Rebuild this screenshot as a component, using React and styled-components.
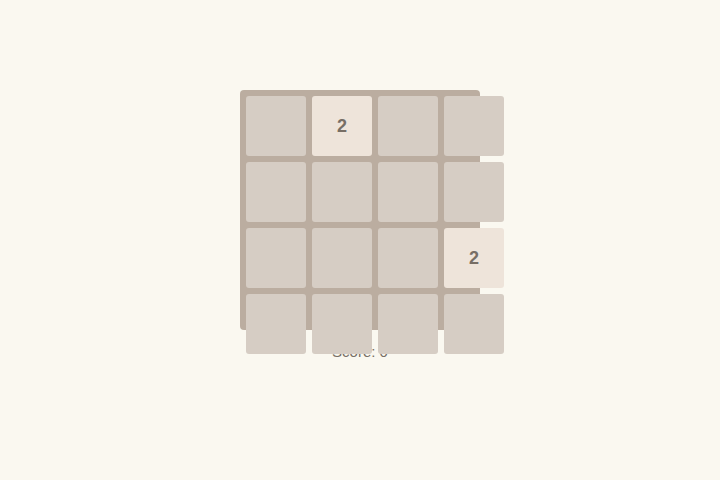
import React from 'react';
import styled, { createGlobalStyle } from 'styled-components';

const GlobalStyle = createGlobalStyle`
  html, body {
    margin: 0;
    padding: 0;
    background: #faf8f0;
  }
  body {
    font-family: "Liberation Sans", Arial, sans-serif;
  }
`;

const board = [
  [0, 2, 0, 0],
  [0, 0, 0, 0],
  [0, 0, 0, 2],
  [0, 0, 0, 0],
];

const App = () => {
  return (
    <Page>
      <GlobalStyle />
      <Board>
        <Grid>
          {board.flat().map((value, i) => (
            <Tile key={i} filled={value > 0}>
              {value > 0 ? value : ''}
            </Tile>
          ))}
        </Grid>
      </Board>
      <Score>Score: 0</Score>
    </Page>
  );
};

const Page = styled.div`
  min-height: 480px;
  box-sizing: border-box;
  padding-top: 90px;
  display: flex;
  flex-direction: column;
  align-items: center;
`;

// the board is fixed at 240px, so the tile grid spills past its right and bottom edges
const Board = styled.div`
  width: 240px;
  height: 240px;
  box-sizing: border-box;
  padding: 6px;
  background: #bbada0;
  border-radius: 4px;
`;

const Grid = styled.div`
  display: grid;
  grid-template-columns: repeat(4, 60px);
  grid-auto-rows: 60px;
  gap: 6px;
  position: relative;
  z-index: 1;
`;

const Tile = styled.div`
  display: flex;
  align-items: center;
  justify-content: center;
  border-radius: 3px;
  background: ${props => (props.filled ? '#eee4da' : '#d6cdc4')};
  color: #776e65;
  font-size: 18px;
  font-weight: bold;
`;

const Score = styled.div`
  margin-top: 12px;
  font-size: 15px;
  line-height: 19px;
  color: #776e65;
`;

export default App;
